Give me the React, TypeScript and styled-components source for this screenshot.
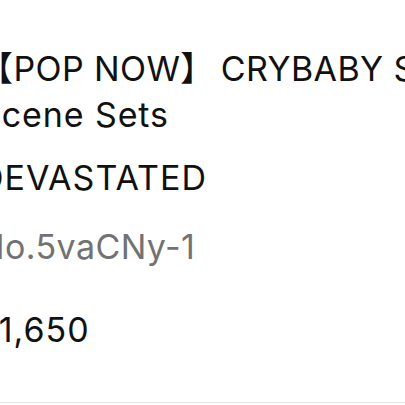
import React from "react";
import styled, { createGlobalStyle } from "styled-components";

const GlobalStyle = createGlobalStyle`
  html, body {
    margin: 0;
    padding: 0;
    background: #ffffff;
    overflow: hidden;
  }
  body {
    font-family: Inter, "Noto Sans CJK JP", "Noto Sans", sans-serif;
    color: #111111;
  }
`;

const product = {
  brand: "【POP NOW】",
  title: "CRYBABY Sad Club Series",
  titleRest: "Scene Sets",
  variant: "DEVASTATED",
  code: "No.5vaCNy-1",
  price: "¥1,650",
};

const Info = styled.section`
  display: flex;
  flex-direction: column;
  width: 720px;
  margin-left: -21px;
  padding-top: 46px;
  padding-bottom: 52px;
  border-bottom: 1px solid #e4e4e4;
`;

const Title = styled.h1`
  margin: 0;
  font-size: 34px;
  font-weight: 400;
  line-height: 46px;
  letter-spacing: 0.4px;
  white-space: nowrap;
`;

const Line = styled.span<{ $spread?: boolean }>`
  display: block;
  letter-spacing: ${(p) => (p.$spread ? "0.9px" : "inherit")};
`;

const Brand = styled.span`
  margin-right: 6px;
`;

const Text = styled.p<{ $muted?: boolean; $gap: number }>`
  margin: ${(p) => p.$gap}px 0 0;
  font-size: 34px;
  line-height: 40px;
  white-space: nowrap;
  letter-spacing: ${(p) => (p.$muted ? "0.4px" : "1px")};
  color: ${(p) => (p.$muted ? "#727272" : "#111111")};
`;

const App = () => {
  return (
    <>
      <GlobalStyle />
      <Info>
        <Title>
          <Line>
            <Brand>{product.brand}</Brand>
            {product.title}
          </Line>
          <Line $spread>{product.titleRest}</Line>
        </Title>
        <Text $gap={20}>{product.variant}</Text>
        <Text $gap={29} $muted>
          {product.code}
        </Text>
        <Text $gap={43}>{product.price}</Text>
      </Info>
    </>
  );
};

export default App;
